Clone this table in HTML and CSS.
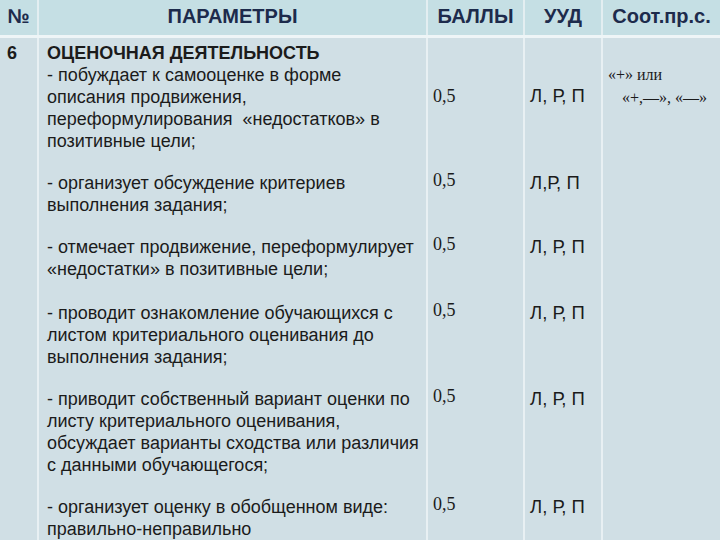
FILE: index.html
```html
<!DOCTYPE html>
<html lang="ru">
<head>
<meta charset="utf-8">
<title>Оценочная деятельность</title>
<link rel="stylesheet" href="styles.css">
</head>
<body>
<table class="grid">
  <colgroup>
    <col class="c-num">
    <col class="c-par">
    <col class="c-pts">
    <col class="c-uud">
    <col class="c-soot">
  </colgroup>
  <thead>
    <tr>
      <th class="h-num">№</th>
      <th class="h-col">ПАРАМЕТРЫ</th>
      <th class="h-col">БАЛЛЫ</th>
      <th class="h-col">УУД</th>
      <th class="h-col">Соот.пр.с.</th>
    </tr>
  </thead>
  <tbody>
    <tr>
      <td class="num" rowspan="6">6</td>
      <td class="par"><b class="title">ОЦЕНОЧНАЯ ДЕЯТЕЛЬНОСТЬ</b><br>- побуждает к самооценке в форме<br>описания продвижения,<br>переформулирования &nbsp;«недостатков» в<br>позитивные цели;</td>
      <td class="pts mid">0,5</td>
      <td class="uud mid">Л, Р, П</td>
      <td class="soot" rowspan="6"><span class="s1">«+» или</span><br><span class="s2">«+,—», «—»</span></td>
    </tr>
    <tr>
      <td class="par">- организует обсуждение критериев<br>выполнения задания;</td>
      <td class="pts">0,5</td>
      <td class="uud">Л,Р, П</td>
    </tr>
    <tr>
      <td class="par wide">- отмечает продвижение, переформулирует<br>«недостатки» в позитивные цели;</td>
      <td class="pts">0,5</td>
      <td class="uud">Л, Р, П</td>
    </tr>
    <tr>
      <td class="par">- проводит ознакомление обучающихся с<br>листом критериального оценивания до<br>выполнения задания;</td>
      <td class="pts">0,5</td>
      <td class="uud">Л, Р, П</td>
    </tr>
    <tr>
      <td class="par">- приводит собственный вариант оценки по<br>листу критериального оценивания,<br>обсуждает варианты сходства или различия<br>с данными обучающегося;</td>
      <td class="pts">0,5</td>
      <td class="uud">Л, Р, П</td>
    </tr>
    <tr>
      <td class="par last">- организует оценку в обобщенном виде:<br>правильно-неправильно</td>
      <td class="pts">0,5</td>
      <td class="uud">Л, Р, П</td>
    </tr>
  </tbody>
</table>
</body>
</html>
```

FILE: styles.css
```css
html, body {
  margin: 0;
  padding: 0;
  background: #d0dfe5;
  width: 720px;
  height: 540px;
  overflow: hidden;
}

.grid {
  width: 720px;
  border-collapse: collapse;
  table-layout: fixed;
  font-family: "Liberation Sans", Arial, sans-serif;
  color: #1b1b1b;
}

.c-num { width: 38px; }
.c-par { width: 389px; }
.c-pts { width: 97px; }
.c-uud { width: 78px; }
.c-soot { width: 118px; }

.grid th {
  background: #c5dfe4;
  color: #1d2b4c;
  font-size: 20px;
  font-weight: bold;
  height: 33px;
  padding: 0 0 2px 0;
  text-align: center;
  vertical-align: middle;
  border-bottom: 3px solid #eef5f7;
}

.grid .h-col {
  border-left: 2px solid #e3eef1;
}

.grid td {
  font-size: 18px;
  line-height: 22px;
  vertical-align: top;
}

.grid .num {
  font-weight: bold;
  padding: 4px 0 0 7px;
}

.grid .par {
  border-left: 2px solid #e8f0f3;
  padding: 4px 4px 16px 8px;
  white-space: nowrap;
}

.grid .par.wide {
  padding-bottom: 18px;
}

.grid .par.last {
  padding-bottom: 0;
}

.title {
  font-size: 18px;
}

.grid .pts {
  border-left: 2px solid #e8f0f3;
  font-family: "Liberation Serif", "Times New Roman", serif;
  font-size: 18px;
  padding: 1px 0 0 5px;
}

.grid .uud {
  border-left: 2px solid #e8f0f3;
  font-size: 18.5px;
  padding: 4px 0 0 5px;
  white-space: nowrap;
}

.grid .pts.mid,
.grid .uud.mid {
  vertical-align: middle;
  padding-top: 0;
  padding-bottom: 14px;
}

.grid .soot {
  border-left: 2px solid #e8f0f3;
  font-family: "Liberation Serif", "Times New Roman", serif;
  font-size: 16px;
  line-height: 23px;
  padding: 25px 0 0 5px;
  white-space: nowrap;
}

.s2 {
  padding-left: 14px;
}
```
